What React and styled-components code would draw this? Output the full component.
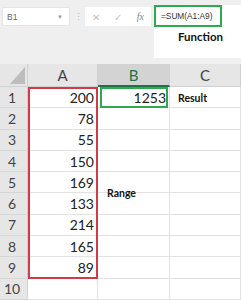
import React from 'react'
import styled, { createGlobalStyle } from 'styled-components'

const Global = createGlobalStyle`
  html, body { margin: 0; padding: 0; background: #fff; }
  body { width: 241px; height: 300px; overflow: hidden; font-family: Lato, 'Liberation Sans', sans-serif; }
`

const Page = styled.div`
  width: 241px;
  height: 300px;
  display: flex;
  flex-direction: column;
  background: #fff;
`

const Top = styled.div`
  height: 64px;
  background: #efefef;
  display: flex;
  align-items: flex-start;
  padding-top: 5px;
  box-sizing: border-box;
`

const Tools = styled.div`
  display: flex;
  align-items: center;
  padding-top: 2px;
  padding-left: 2px;
  width: 152px;
`

const NameBox = styled.div`
  width: 68px;
  height: 19px;
  background: #fff;
  box-sizing: border-box;
  border: 1px solid #e4e4e4;
  display: flex;
  align-items: center;
  justify-content: space-between;
  padding: 0 6px 0 4px;
  font-family: 'Liberation Sans', sans-serif;
  font-size: 8.5px;
  color: #666;
`

const Caret = styled.span`
  font-size: 6px;
  color: #999;
`

const Dots = styled.div`
  width: 15px;
  display: flex;
  justify-content: center;
  color: #bbb;
  font-size: 9px;
  letter-spacing: -1px;
`

const FxBar = styled.div`
  width: 66px;
  height: 19px;
  background: #fff;
  display: flex;
  align-items: center;
  justify-content: space-around;
  color: #c4c4c4;
  font-size: 10px;
`

const Fx = styled.span`
  font-family: 'Liberation Serif', serif;
  font-style: italic;
  color: #888;
  font-size: 10px;
`

const Card = styled.div`
  width: 87px;
  height: 53px;
  background: #fff;
  display: flex;
  flex-direction: column;
  align-items: flex-start;
`

const Formula = styled.div`
  width: 68px;
  height: 22px;
  box-sizing: border-box;
  border: 2px solid #2eaa4e;
  display: flex;
  align-items: center;
  padding-left: 5px;
  font-family: 'Liberation Sans', sans-serif;
  font-size: 8.3px;
  color: #333;
`

const Caption = styled.div`
  font-weight: 700;
  font-size: 11.5px;
  color: #111;
  margin-top: 3px;
  align-self: center;
  margin-left: 6px;
`

const Sheet = styled.div`
  display: grid;
  grid-template-columns: 28px 70px 72px 71px;
  grid-template-rows: 23px repeat(10, 21.3px);
`

const Corner = styled.div`
  background: #e6e6e6;
  border-right: 1px solid #d0d0d0;
  border-bottom: 1px solid #d0d0d0;
  box-sizing: border-box;
  display: flex;
  align-items: flex-end;
  justify-content: flex-end;
  padding: 0 2px 2px 0;
`

const ColHead = styled.div`
  background: ${(p) => (p.$active ? '#d3d3d3' : '#e6e6e6')};
  color: ${(p) => (p.$active ? '#217346' : '#444')};
  border-right: 1px solid #d0d0d0;
  border-bottom: ${(p) => (p.$active ? '2px solid #217346' : '1px solid #d0d0d0')};
  box-sizing: border-box;
  display: flex;
  align-items: center;
  justify-content: center;
  font-size: 15px;
`

const RowHead = styled.div`
  background: #e6e6e6;
  border-right: 1px solid #d0d0d0;
  border-bottom: 1px solid #d6d6d6;
  box-sizing: border-box;
  display: flex;
  align-items: center;
  padding-left: ${(p) => (p.$wide ? '4px' : '8px')};
  font-size: 14px;
  color: #444;
`

const Cell = styled.div`
  border-right: 1px solid #e2e2e2;
  border-bottom: 1px solid #e2e2e2;
  box-sizing: border-box;
  display: flex;
  align-items: center;
  justify-content: flex-end;
  padding-right: 3px;
  font-size: 14px;
  color: #222;
`

const Frame = styled.div`
  grid-column: ${(p) => p.$col};
  grid-row: ${(p) => p.$rows};
  border: 2px solid ${(p) => p.$color};
  margin: ${(p) => p.$margin || '0'};
  pointer-events: none;
`

const Note = styled.div`
  grid-column: ${(p) => p.$col};
  grid-row: ${(p) => p.$rows};
  display: flex;
  align-items: center;
  padding-left: ${(p) => p.$pad};
  font-weight: 700;
  font-size: 10.5px;
  color: #111;
`

const values = [200, 78, 55, 150, 169, 133, 214, 165, 89]

export default function App() {
  const rows = Array.from({ length: 10 }, (_, i) => i + 1)
  return (
    <Page>
      <Global />
      <Top>
        <Tools>
          <NameBox>
            B1<Caret>▼</Caret>
          </NameBox>
          <Dots>⋮</Dots>
          <FxBar>
            <span>✕</span>
            <span>✓</span>
            <Fx>fx</Fx>
          </FxBar>
        </Tools>
        <Card>
          <Formula>=SUM(A1:A9)</Formula>
          <Caption>Function</Caption>
        </Card>
      </Top>
      <Sheet>
        <Corner>
          <svg width="15" height="17" viewBox="0 0 15 17">
            <polygon points="15,0 15,17 0,17" fill="#bdbdbd" />
          </svg>
        </Corner>
        <ColHead>A</ColHead>
        <ColHead $active>B</ColHead>
        <ColHead>C</ColHead>
        {rows.map((r) => (
          <React.Fragment key={r}>
            <RowHead $wide={r > 9}>{r}</RowHead>
            <Cell style={{ gridRow: r + 1, gridColumn: 2 }}>{values[r - 1] ?? ''}</Cell>
            <Cell style={{ gridRow: r + 1, gridColumn: 3 }}>{r === 1 ? '1253' : ''}</Cell>
            <Cell style={{ gridRow: r + 1, gridColumn: 4 }} />
          </React.Fragment>
        ))}
        <Frame $col="2" $rows="2 / 11" $color="#d23a47" />
        <Frame $col="3" $rows="2 / 3" $color="#2eaa4e" $margin="0 2px" />
        <Note $col="4" $rows="2 / 3" $pad="8px">Result</Note>
        <Note $col="3" $rows="6 / 8" $pad="9px">Range</Note>
      </Sheet>
    </Page>
  )
}
